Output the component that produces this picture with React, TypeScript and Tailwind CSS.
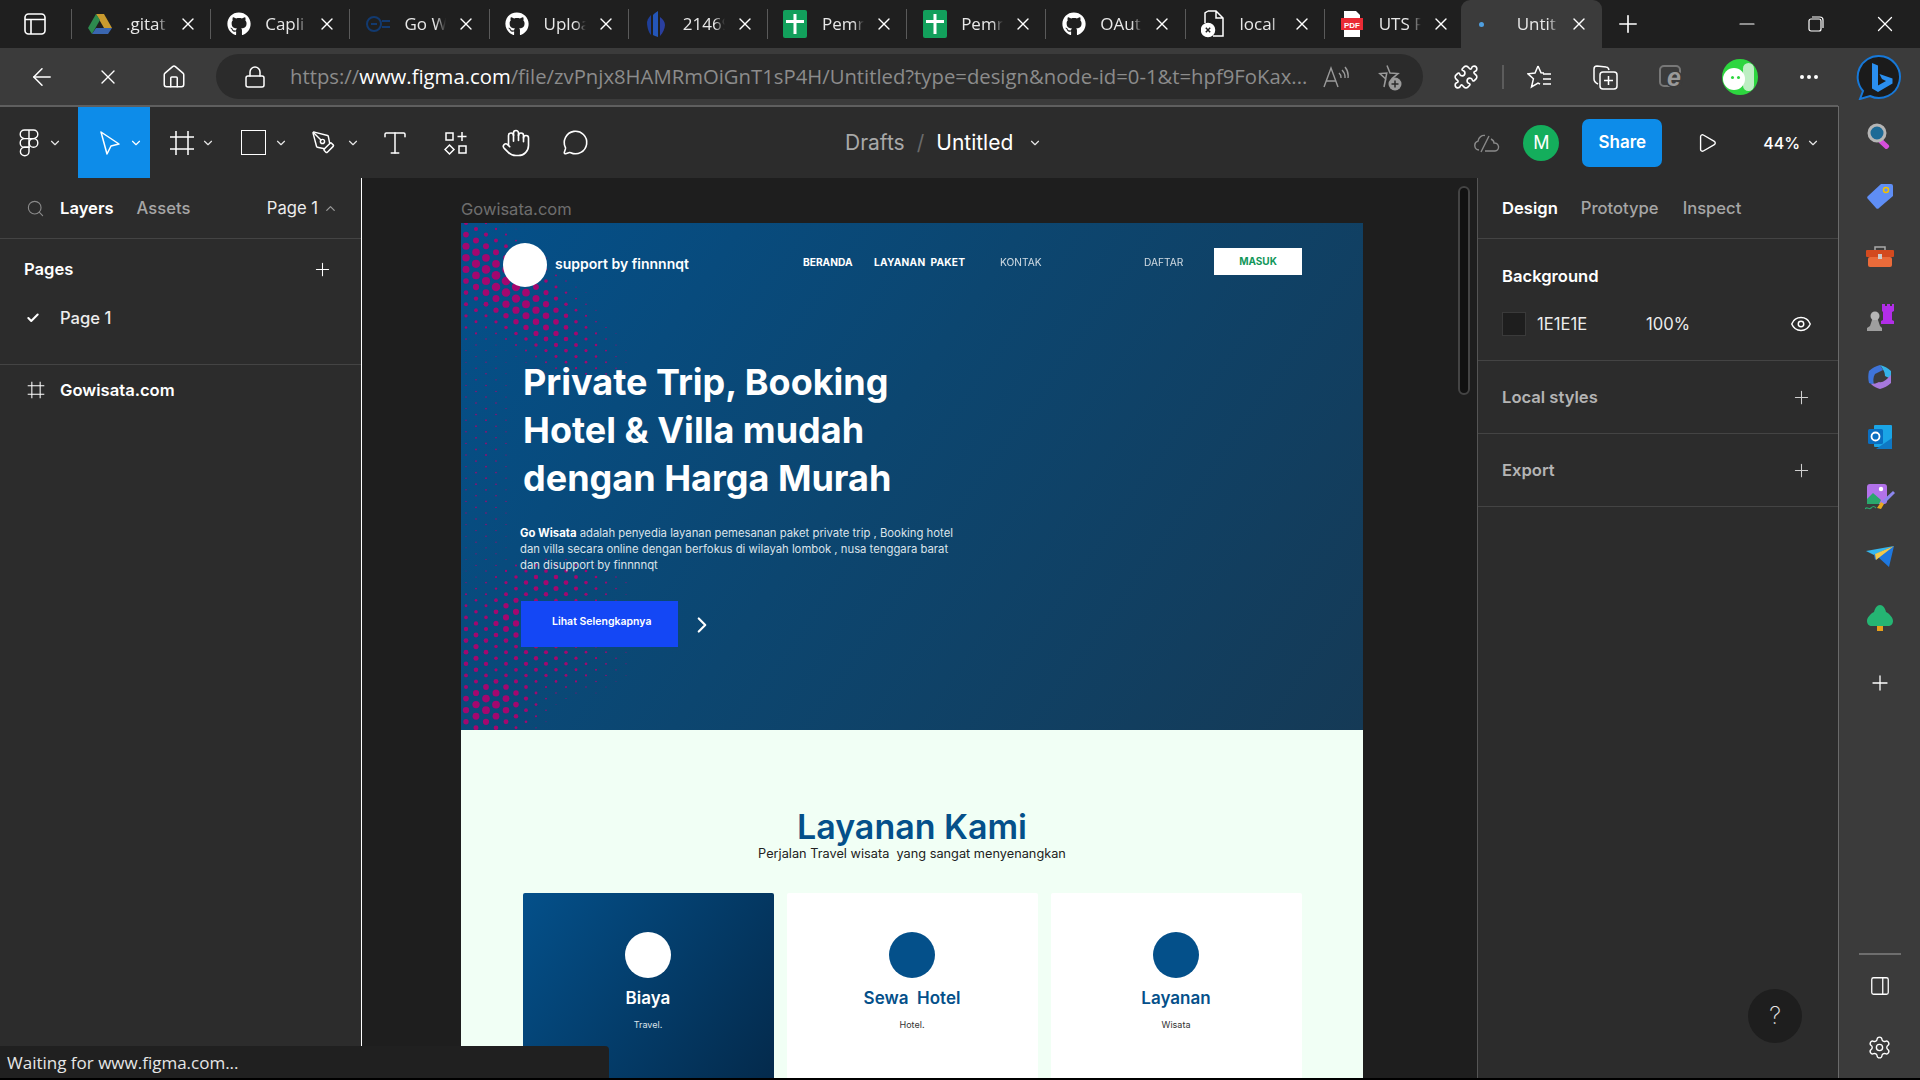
import {
  ArrowLeft,
  ChevronDown,
  ChevronRight,
  ChevronUp,
  Eye,
  Check,
  Hand,
  Home,
  Lock,
  MessageCircle,
  Minus,
  MoreHorizontal,
  PanelRight,
  PenTool,
  Play,
  Plus,
  Puzzle,
  Search,
  Settings,
  Type,
  X,
} from "lucide-react";
import { FaGithub } from "react-icons/fa";
import { ReactNode } from "react";

const PINK = "#a3076f";

// halftone blobs on the hero, [cx, cy, spreadX, spreadY, rotation, max radius]
const BLOBS: number[][] = [
  [38, 58, 110, 34, 0.7, 4.4],
  [10, 60, 36, 56, 0, 2.4],
  [28, 482, 48, 32, -0.3, 4],
  [14, 425, 34, 58, 0, 2.6],
  [52, 396, 34, 42, 0.6, 3.2],
  [88, 362, 62, 24, 0, 2.6],
  [70, 435, 80, 36, 0, 2.2],
  [22, 230, 36, 170, 0, 0.9],
];

const dotRadius = (x: number, y: number) => {
  let r = 0;
  for (const [cx, cy, sx, sy, rot, max] of BLOBS) {
    const dx = x - cx;
    const dy = y - cy;
    const u = dx * Math.cos(rot) + dy * Math.sin(rot);
    const v = -dx * Math.sin(rot) + dy * Math.cos(rot);
    r = Math.max(r, max * Math.exp(-(u * u) / (sx * sx) - (v * v) / (sy * sy)));
  }
  return r;
};

const Halftone = () => {
  const dots: { x: number; y: number; r: number }[] = [];
  for (let col = 0; col < 20; col++) {
    for (let row = 0; row < 46; row++) {
      const x = 5 + col * 10;
      const y = row * 11.6 + (col % 2 ? 6 : 0);
      const r = dotRadius(x, y);
      if (r > 0.4) dots.push({ x, y, r });
    }
  }
  return (
    <svg className="absolute left-0 top-0 h-[507px] w-[210px]" viewBox="0 0 210 507">
      {dots.map((d) => (
        <circle key={`${d.x}-${d.y}`} cx={d.x} cy={d.y} r={d.r} fill={PINK} />
      ))}
    </svg>
  );
};

const DriveIcon = () => (
  <svg width="24" height="22" viewBox="0 0 24 22">
    <path d="M8 1h8l8 14h-8z" fill="#c99a2e" />
    <path d="M8 1 0 15l4 6 8-14z" fill="#2d8a4e" />
    <path d="M4 21h16l4-6H8z" fill="#3a66b0" />
  </svg>
);

const GoIcon = () => (
  <svg width="26" height="18" viewBox="0 0 26 18" fill="none" stroke="#123a70" strokeWidth="2">
    <circle cx="9" cy="9" r="7" />
    <path d="M6 9h6M17 6h8M17 12h8" />
  </svg>
);

const BarsIcon = () => (
  <svg width="20" height="26" viewBox="0 0 20 26">
    <path d="M1 11c1-4 3-6 4-7v20c-2-2-4-7-4-13z" fill="#1f3f99" />
    <path d="M7 4c1-1 3-3 5-4v26c-2-1-4-1-5-2z" fill="#2456b8" />
    <path d="M14 6c3 2 5 5 5 8s-2 8-5 11z" fill="#2a3f9f" />
  </svg>
);

const SheetIcon = () => (
  <svg width="24" height="28" viewBox="0 0 24 28">
    <rect width="24" height="28" rx="2" fill="#12a05c" />
    <path d="M10.500 4h3v6H21v3h-7.500v11h-3V13H3v-3h7.500z" fill="#fff" />
  </svg>
);

const FileErrorIcon = () => (
  <svg width="24" height="28" viewBox="0 0 24 28" fill="none" stroke="#fff" strokeWidth="1.5">
    <path d="M7 1h8l7 7v18H12M4 13V3l3-2M15 1v7h7" />
    <circle cx="7" cy="20" r="6.5" fill="#fff" />
    <path d="m4.8 17.8 4.4 4.4m0-4.4-4.4 4.4" stroke="#1f1f1f" />
  </svg>
);

const PdfIcon = () => (
  <svg width="22" height="26" viewBox="0 0 22 26">
    <path d="M3 0h12l4 4v22H3z" fill="#fff" />
    <rect y="7" width="22" height="12" fill="#ea2b35" />
    <text x="11" y="16.5" fontSize="8" fontWeight="700" textAnchor="middle" fill="#fff" fontFamily="Liberation Sans">
      PDF
    </text>
  </svg>
);

const Tab = ({ icon, title }: { icon: ReactNode; title: string }) => (
  <div className="flex h-[48px] w-[139.2px] shrink-0 items-center border-r-0">
    <div className="h-[30px] w-px bg-[#5a5a5a]" />
    <div className="flex w-[54px] justify-center pl-px">{icon}</div>
    <span className="w-[42px] overflow-hidden whitespace-nowrap text-[17px] text-[#e8e8e8] [mask-image:linear-gradient(to_right,black_75%,transparent)]">
      {title}
    </span>
    <X size={20} strokeWidth={1.6} className="ml-[10px] text-white" />
  </div>
);

const TabBar = () => (
  <div className="flex h-[48px] items-center bg-[#1f1f1f] font-['Open_Sans',sans-serif]">
    <div className="flex w-[71px] justify-center pr-[1px]">
      <svg width="22" height="22" viewBox="0 0 22 22" fill="none" stroke="#fff" strokeWidth="1.6">
        <rect x="1" y="1" width="20" height="20" rx="3.5" />
        <path d="M1 6.5h20M7 6.5V21" />
      </svg>
    </div>
    <Tab icon={<DriveIcon />} title=".gitat" />
    <Tab icon={<FaGithub size={24} color="#fff" />} title="Capli" />
    <Tab icon={<GoIcon />} title="Go W" />
    <Tab icon={<FaGithub size={24} color="#fff" />} title="Uploa" />
    <Tab icon={<BarsIcon />} title="21469" />
    <Tab icon={<SheetIcon />} title="Pemr" />
    <Tab icon={<SheetIcon />} title="Pemr" />
    <Tab icon={<FaGithub size={24} color="#fff" />} title="OAut" />
    <Tab icon={<FileErrorIcon />} title="local" />
    <div className="flex h-[48px] w-[137px] shrink-0 items-center">
      <div className="h-[30px] w-px bg-[#5a5a5a]" />
      <div className="flex w-[54px] justify-center pl-px">
        <PdfIcon />
      </div>
      <span className="w-[42px] overflow-hidden whitespace-nowrap text-[17px] text-[#e8e8e8] [mask-image:linear-gradient(to_right,black_75%,transparent)]">
        UTS F
      </span>
      <X size={20} strokeWidth={1.6} className="ml-[10px] text-white" />
    </div>
    <div className="flex h-[48px] w-[141px] shrink-0 items-center rounded-t-[9px] bg-[#3b3b3b]">
      <div className="ml-[18px] h-[5px] w-[5px] rounded-full bg-[#4f9fe0]" />
      <span className="ml-[33px] w-[42px] overflow-hidden whitespace-nowrap text-[17px] text-[#e8e8e8] [mask-image:linear-gradient(to_right,black_75%,transparent)]">
        Untit
      </span>
      <X size={20} strokeWidth={1.6} className="ml-[10px] text-white" />
    </div>
    <Plus size={28} strokeWidth={1.4} className="ml-[12px] text-white" />
    <Minus size={24} strokeWidth={1.2} className="ml-[93px] text-white" />
    <svg className="ml-[49px]" width="16" height="16" viewBox="0 0 16 16" fill="none" stroke="#fff" strokeWidth="1.2">
      <rect x="1" y="3" width="12" height="12" rx="2" />
      <path d="M4 1h8a3 3 0 0 1 3 3v8" />
    </svg>
    <X size={26} strokeWidth={1.2} className="ml-[48px] text-white" />
  </div>
);

const ReadAloud = () => (
  <svg width="26" height="24" viewBox="0 0 26 24" fill="none" stroke="#9a9a9a" strokeWidth="1.4">
    <path d="M1 22 8 3l7 19M3.5 16h9" />
    <path d="M16 8a6 6 0 0 1 2 5M19 5a10 10 0 0 1 3 8M22 2a14 14 0 0 1 3 11" />
  </svg>
);

const StarPlus = () => (
  <svg width="28" height="28" viewBox="0 0 28 28" fill="none" stroke="#9a9a9a" strokeWidth="1.5">
    <path d="M12 2.5 15 10l8 .6-6 5 1 4M9 24l1.8-8-6-5.4 7-.6z" />
    <circle cx="20" cy="21" r="6.5" fill="#9a9a9a" stroke="none" />
    <path d="M20 17.5v7M16.5 21h7" stroke="#2b2b2b" />
  </svg>
);

const FavList = () => (
  <svg width="26" height="26" viewBox="0 0 26 26" fill="none" stroke="#fff" strokeWidth="1.5">
    <path d="M11 2 8 9l-7 .8 5.4 5L4.5 23l6.5-4 2 1M11 2l3 6.8 3 .2M16 10h8M16 15h8M16 20h8" />
  </svg>
);

const Collections = () => (
  <svg width="26" height="26" viewBox="0 0 26 26" fill="none" stroke="#fff" strokeWidth="1.5">
    <path d="M6 20c-2-1-4-2-4-5V5c0-2 1.500-3 3-3l9 1c1.500 0 2.500 1 3 3" />
    <rect x="8" y="8" width="17" height="17" rx="3" />
    <path d="M16.500 12v9M12 16.500h9" />
  </svg>
);

const IeMode = () => (
  <svg width="26" height="24" viewBox="0 0 26 24" fill="none">
    <rect x="1" y="1" width="20" height="20" rx="4" stroke="#777" strokeWidth="2" />
    <circle cx="15" cy="14" r="9" fill="#3b3b3b" />
    <text x="15" y="21" fontSize="25" fontWeight="700" fontStyle="italic" textAnchor="middle" fill="#999" fontFamily="Liberation Sans">
      e
    </text>
  </svg>
);

const ChatExt = () => (
  <div className="relative h-[36px] w-[36px] overflow-hidden rounded-full bg-[#2dd63f]">
    <div className="absolute left-[21px] top-[4px] h-[28px] w-[11px] rounded-[6px] bg-[#bdeec3]" />
    <div className="absolute left-[1px] top-[9px] h-[22px] w-[22px] rounded-full bg-white" />
    <div className="absolute left-[9px] top-[17px] h-[3px] w-[3px] rounded-full bg-[#2dd63f]" />
    <div className="absolute left-[15px] top-[17px] h-[3px] w-[3px] rounded-full bg-[#2dd63f]" />
  </div>
);

const BingIcon = () => (
  <svg width="46" height="46" viewBox="0 0 46 46" fill="none">
    <path d="M23 2a21 21 0 1 1-9 40l-10 3 3-8A21 21 0 0 1 23 2z" fill="#1b1b1b" stroke="#1678d8" strokeWidth="2" />
    <path d="M16 9l6 2.500v20l8-4.500-4-2-2.500-5 13 4.500v5L22 38l-6-3.500z" fill="#2a8ff0" />
  </svg>
);

const AddressBar = () => (
  <div className="flex h-[57px] items-center bg-[#3b3b3b]">
    <ArrowLeft size={28} strokeWidth={1.3} className="ml-[28px] text-white" />
    <X size={24} strokeWidth={1.4} className="ml-[40px] text-white" />
    <Home size={26} strokeWidth={1.4} className="ml-[41px] text-white" />
    <div className="ml-[29px] flex h-[45px] w-[1207px] items-center rounded-full bg-[#2b2b2b] font-['Open_Sans',sans-serif]">
      <Lock size={24} strokeWidth={1.5} className="ml-[27px] text-white" />
      <span className="ml-[23px] whitespace-nowrap text-[20.300px] text-[#8c8c8c]">
        https://<span className="text-white">www.figma.com</span>/file/zvPnjx8HAMRmOiGnT1sP4H/Untitled?type=design&amp;node-id=0-1&amp;t=hpf9FoKax...
      </span>
      <div className="ml-auto flex items-center gap-[26px] pr-[20px]">
        <ReadAloud />
        <StarPlus />
      </div>
    </div>
    <Puzzle size={26} strokeWidth={1.5} className="ml-[30px] text-white" />
    <div className="ml-[23px] h-[24px] w-[2px] bg-[#5c5c5c]" />
    <div className="ml-[23px]">
      <FavList />
    </div>
    <div className="ml-[39px]">
      <Collections />
    </div>
    <div className="ml-[41px]">
      <IeMode />
    </div>
    <div className="ml-[37px]">
      <ChatExt />
    </div>
    <MoreHorizontal size={24} strokeWidth={2} className="ml-[39px] text-white" />
    <div className="ml-[35px]">
      <BingIcon />
    </div>
  </div>
);

const FigmaMark = () => (
  <svg width="20" height="28" viewBox="0 0 20 28" fill="none" stroke="#fff" strokeWidth="1.4">
    <path d="M10 1H5.500a4.300 4.300 0 0 0 0 8.600H10zM10 1h4.500a4.300 4.300 0 0 1 0 8.600H10zM10 9.600H5.500a4.300 4.300 0 0 0 0 8.600H10z" />
    <circle cx="14.500" cy="13.900" r="4.300" />
    <path d="M10 18.200H5.500a4.300 4.300 0 1 0 4.500 4.300z" />
  </svg>
);

const FrameIcon = ({ size = 26, width = 1.5 }: { size?: number; width?: number }) => (
  <svg width={size} height={size} viewBox="0 0 26 26" fill="none" stroke="#fff" strokeWidth={width}>
    <path d="M7 1v24M19 1v24M1 7h24M1 19h24" />
  </svg>
);

const Resources = () => (
  <svg width="24" height="26" viewBox="0 0 24 26" fill="none" stroke="#fff" strokeWidth="1.5">
    <rect x="2" y="3" width="7" height="7" />
    <path d="M18 2v9M13.500 6.500h9M5.500 15l4.500 4.500L5.500 24 1 19.500z" />
    <rect x="15" y="16" width="7" height="7" />
  </svg>
);

const ToolBar = () => (
  <div className="flex h-[71px] items-center bg-[#2c2c2c] font-['Inter',sans-serif]">
    <div className="flex w-[78px] items-center pl-[19px]">
      <FigmaMark />
      <ChevronDown size={14} className="ml-[9px] text-[#e6e6e6]" />
    </div>
    <div className="flex h-[71px] w-[72px] items-center bg-[#0d8ce9] pl-[21px]">
      <svg width="22" height="26" viewBox="0 0 22 26" fill="none" stroke="#fff" strokeWidth="1.5">
        <path d="M2 2 20 14l-8 2-4 8z" strokeLinejoin="round" />
      </svg>
      <ChevronDown size={14} className="ml-[8px] text-white" />
    </div>
    <div className="flex w-[71px] items-center pl-[19px]">
      <FrameIcon />
      <ChevronDown size={14} className="ml-[6px] text-[#e6e6e6]" />
    </div>
    <div className="flex w-[71px] items-center pl-[20px]">
      <div className="h-[25px] w-[25px] border-[1.5px] border-white" />
      <ChevronDown size={14} className="ml-[8px] text-[#e6e6e6]" />
    </div>
    <div className="flex w-[71px] items-center pl-[19px]">
      <PenTool size={25} strokeWidth={1.4} className="text-white" />
      <ChevronDown size={14} className="ml-[10px] text-[#e6e6e6]" />
    </div>
    <div className="flex w-[61px] items-center pl-[17px]">
      <Type size={30} strokeWidth={1.2} className="text-white" />
    </div>
    <div className="flex w-[60px] items-center pl-[20px]">
      <Resources />
    </div>
    <div className="flex w-[60px] items-center pl-[17px]">
      <Hand size={30} strokeWidth={1.3} className="text-white" />
    </div>
    <MessageCircle size={27} strokeWidth={1.4} className="ml-[18px] text-white" />
    <div className="ml-[256px] flex items-center text-[21px]">
      <span className="text-[#a9a9a9]">Drafts</span>
      <span className="ml-[12px] text-[#6a6a6a]">/</span>
      <span className="ml-[12px] text-white">Untitled</span>
      <ChevronDown size={14} className="ml-[15px] text-[#e6e6e6]" />
    </div>
    <svg className="ml-[432px]" width="26" height="24" viewBox="0 0 26 24" fill="none" stroke="#8a8a8a" strokeWidth="1.4">
      <path d="M5 19a4.500 4.500 0 0 1-1-8.800C4.500 6 8 4 11 4.500M15 5l-8 16M17 8c2 1 3 3 3 4a4 4 0 0 1 1 8H11" />
    </svg>
    <div className="ml-[23px] flex h-[36px] w-[36px] items-center justify-center rounded-full bg-[#14ae5c] text-[18px] text-white">M</div>
    <div className="ml-[23px] flex h-[48px] w-[80px] items-center justify-center rounded-[7px] bg-[#0d8ce9] text-[17px] font-semibold text-white">
      Share
    </div>
    <Play size={22} strokeWidth={1.5} className="ml-[34px] text-white" />
    <span className="ml-[45px] text-[16px] font-medium text-white">44%</span>
    <ChevronDown size={14} className="ml-[6px] text-[#e6e6e6]" />
  </div>
);

const LeftPanel = () => (
  <aside className="flex w-[362px] shrink-0 flex-col border-r border-white bg-[#2c2c2c] font-['Inter',sans-serif] text-[16.600px]">
    <div className="flex h-[61px] items-center border-b border-[#444] pl-[26px] pr-[23px]">
      <Search size={19} strokeWidth={1.4} className="text-[#8a8a8a]" />
      <span className="ml-[15px] font-semibold text-white">Layers</span>
      <span className="ml-[23px] font-medium text-[#a6a6a6]">Assets</span>
      <span className="ml-auto text-[#ededed]">Page 1</span>
      <ChevronUp size={15} className="ml-[5px] text-[#9a9a9a]" />
    </div>
    <div className="flex h-[126px] flex-col border-b border-[#444]">
      <div className="flex h-[60px] items-center pl-[24px] pr-[28px]">
        <span className="font-semibold text-white">Pages</span>
        <Plus size={21} strokeWidth={1.2} className="ml-auto text-white" />
      </div>
      <div className="flex h-[38px] items-center pl-[26px]">
        <Check size={14} strokeWidth={3.5} className="text-white" />
        <span className="ml-[20px] font-medium text-[#ededed]">Page 1</span>
      </div>
    </div>
    <div className="flex h-[50px] items-center pl-[27px]">
      <FrameIcon size={18} />
      <span className="ml-[15px] font-semibold text-white">Gowisata.com</span>
    </div>
  </aside>
);

const NavLink = ({ children, className }: { children: ReactNode; className: string }) => (
  <span className={`mb-[5px] whitespace-nowrap text-[10.200px] text-white ${className}`}>{children}</span>
);

const Hero = () => (
  <section className="relative h-[507px] shrink-0 overflow-hidden bg-[linear-gradient(125deg,#04508a_0%,#0c4670_45%,#153a56_100%)] font-['Inter',sans-serif]">
    <Halftone />
    <div className="relative flex items-center pl-[42px] pt-[20px]">
      <div className="h-[44px] w-[44px] rounded-full bg-white" />
      <span className="mb-[3px] ml-[8px] w-[248px] whitespace-nowrap text-[14px] font-semibold text-white">support by finnnnqt</span>
      <NavLink className="w-[71px] font-bold">BERANDA</NavLink>
      <NavLink className="w-[126px] font-bold tracking-[0.2px]">LAYANAN&nbsp; PAKET</NavLink>
      <NavLink className="w-[144px] opacity-80">KONTAK</NavLink>
      <NavLink className="w-[70px] opacity-80">DAFTAR</NavLink>
      <div className="mb-[7px] flex h-[27px] w-[88px] items-center justify-center bg-white text-[10px] font-bold text-[#12975a]">MASUK</div>
    </div>
    <h1 className="relative ml-[62px] mt-[71px] text-[36px] font-bold leading-[48px] text-white">
      Private Trip, Booking
      <br />
      Hotel &amp; Villa mudah
      <br />
      dengan Harga Murah
    </h1>
    <p className="relative ml-[59px] mt-[23px] w-[438px] text-[11.300px] leading-[16px] text-[#dbe3ea]">
      <b className="font-bold text-white">Go Wisata</b> adalah penyedia layanan pemesanan paket private trip , Booking hotel dan villa secara online dengan berfokus di wilayah lombok , nusa tenggara barat dan disupport by finnnnqt
    </p>
    <div className="relative ml-[60px] mt-[28px] flex items-center">
      <div className="flex h-[46px] w-[157px] items-start bg-[#1447f5] pl-[31px] pt-[14px] text-[10.500px] font-semibold leading-[14px] text-white">
        Lihat Selengkapnya
      </div>
      <ChevronRight size={26} strokeWidth={2} className="ml-[11px] mt-[2px] text-white" />
    </div>
  </section>
);

const ServiceCard = ({ active, title, sub }: { active?: boolean; title: string; sub: string }) => (
  <div
    className={`flex h-[200px] w-[251px] shrink-0 flex-col items-center rounded-t-[2px] pt-[39px] ${
      active ? "bg-[linear-gradient(125deg,#04508a,#04294a)]" : "bg-white"
    }`}
  >
    <div className={`h-[46px] w-[46px] rounded-full ${active ? "bg-white" : "bg-[#04508a]"}`} />
    <span className={`mt-[8px] text-[17px] font-semibold leading-[24px] ${active ? "text-white" : "text-[#04508a]"}`}>{title}</span>
    <span className={`mt-[9px] text-[9px] leading-[12px] ${active ? "text-[#dbe3ea]" : "text-[#333]"}`}>{sub}</span>
  </div>
);

const Services = () => (
  <section className="flex min-h-0 flex-1 flex-col items-center overflow-hidden bg-[#f1fff5] font-['Inter',sans-serif]">
    <h2 className="mt-[78px] shrink-0 text-[34px] font-semibold leading-[38px] text-[#04508a]">Layanan Kami</h2>
    <p className="-mt-[1px] shrink-0 text-[12.750px] leading-[18px] text-[#222]">Perjalan Travel wisata&nbsp; yang sangat menyenangkan</p>
    <div className="mt-[30px] flex shrink-0 gap-[13px]">
      <ServiceCard active title="Biaya" sub="Travel." />
      <ServiceCard title={"Sewa\u00a0 Hotel"} sub="Hotel." />
      <ServiceCard title="Layanan" sub="Wisata" />
    </div>
  </section>
);

const Canvas = () => (
  <main className="relative flex flex-1 overflow-hidden bg-[#1e1e1e] pl-[99px] font-['Inter',sans-serif]">
    <div className="flex h-full w-[902px] flex-col">
      <div className="flex h-[45px] shrink-0 items-end pb-[1px] text-[16.500px] text-[#6e6e6e]">Gowisata.com</div>
      <Hero />
      <Services />
    </div>
    <div className="ml-[95px] mt-[8px] h-[209px] w-[12px] rounded-[6px] border-2 border-[#444] bg-[#111]" />
  </main>
);

const DesignRow = ({ label }: { label: string }) => (
  <div className="flex h-[73px] items-center border-b border-[#444] pl-[24px] pr-[26px]">
    <span className="font-semibold text-[#b4b4b4]">{label}</span>
    <Plus size={21} strokeWidth={1.2} className="ml-auto text-[#d0d0d0]" />
  </div>
);

const RightPanel = () => (
  <aside className="flex w-[361px] shrink-0 flex-col border-l border-[#555] bg-[#2c2c2c] font-['Inter',sans-serif] text-[16.600px]">
    <div className="flex h-[61px] items-center border-b border-[#444] pl-[24px]">
      <span className="font-semibold text-white">Design</span>
      <span className="ml-[23px] font-medium text-[#a6a6a6]">Prototype</span>
      <span className="ml-[24px] font-medium text-[#a6a6a6]">Inspect</span>
    </div>
    <div className="h-[122px] border-b border-[#444] pl-[24px] pr-[26px]">
      <div className="pt-[26px] font-semibold leading-[22px] text-white">Background</div>
      <div className="mt-[25px] flex items-center">
        <div className="h-[24px] w-[24px] border border-[#3a3a3a] bg-[#1e1e1e]" />
        <span className="ml-[11px] w-[109px] text-[#ededed]">1E1E1E</span>
        <span className="text-[#ededed]">100%</span>
        <Eye size={22} strokeWidth={1.6} className="ml-auto text-white" />
      </div>
    </div>
    <DesignRow label="Local styles" />
    <DesignRow label="Export" />
  </aside>
);

const SideIcon = ({ children }: { children: ReactNode }) => (
  <div className="flex h-[60.200px] items-center justify-center">{children}</div>
);

const SideBar = () => (
  <aside className="flex w-[82px] shrink-0 flex-col border-t-0 bg-[#3b3b3b] pt-[1px]">
    <div className="flex flex-1 flex-col border-l border-[#6a6a6a]">
      <SideIcon>
        <svg width="26" height="26" viewBox="0 0 26 26">
          <rect x="14" y="15" width="12" height="5" rx="2" transform="rotate(42 14 15)" fill="#d64fdc" />
          <circle cx="10" cy="10" r="8" fill="#1d6a96" stroke="#b5b5b5" strokeWidth="3" />
        </svg>
      </SideIcon>
      <SideIcon>
        <svg width="26" height="26" viewBox="0 0 26 26">
          <path d="M14 1h10a2 2 0 0 1 2 2v10L12 25a2 2 0 0 1-3 0L1 16a2 2 0 0 1 0-3z" fill="#5f8ef5" />
          <circle cx="19" cy="7" r="2.500" fill="none" stroke="#f2c200" strokeWidth="1.500" />
        </svg>
      </SideIcon>
      <SideIcon>
        <svg width="28" height="22" viewBox="0 0 28 22">
          <path d="M9 5V2h10v3" fill="none" stroke="#aaa" strokeWidth="1.500" />
          <rect y="5" width="28" height="7" rx="1" fill="#d34a1f" />
          <rect x="2" y="12" width="24" height="10" rx="2" fill="#ea6b3a" />
          <rect x="12" y="9" width="4" height="5" fill="#ccc" />
        </svg>
      </SideIcon>
      <SideIcon>
        <svg width="28" height="28" viewBox="0 0 28 28">
          <path d="M16 1h3v2h2V1h3v2h2V1h2v7l-2 1v8l2 1v3H15v-3l2-1V9l-1-1z" fill="#b22ee8" />
          <circle cx="9" cy="13" r="4.500" fill="#b5b5b5" />
          <path d="M6 17h6l2 6 2 2v3H1v-3l3-2z" fill="#9e9e9e" />
        </svg>
      </SideIcon>
      <SideIcon>
        <svg width="26" height="26" viewBox="0 0 26 26">
          <path d="M13 1c-4 1-8 3-11 6-1 4-1 8 0 12l5 2c-1-4-1-8 1-11l8-4z" fill="#3f74d9" />
          <path d="M13 1c4 1 8 3 11 6v8l-6-3c0-3-1-6-5-11z" fill="#35b3e8" />
          <path d="M24 11v8c-3 3-7 5-11 6-3-1-6-2-9-5 3 0 6-1 8-2 4 1 7-2 12-7z" fill="#a678dc" />
        </svg>
      </SideIcon>
      <SideIcon>
        <svg width="24" height="24" viewBox="0 0 24 24">
          <rect x="6" y="0" width="18" height="22" rx="1" fill="#1aa5e6" />
          <path d="M8 24h16V13z" fill="#0f78c4" />
          <rect x="0" y="4" width="15" height="15" rx="1.500" fill="#0a6ec0" />
          <circle cx="7.500" cy="11.500" r="4" fill="none" stroke="#fff" strokeWidth="1.800" />
        </svg>
      </SideIcon>
      <SideIcon>
        <svg width="30" height="28" viewBox="0 0 30 28">
          <rect x="2" y="1" width="20" height="20" rx="3" fill="#b272ea" />
          <path d="M2 16l6-6 8 7-2 4H2z" fill="#2aa86c" />
          <circle cx="16" cy="6" r="2.200" fill="#fff" />
          <path d="m28 8 2 2-11 11-3-2z" fill="#8c86ef" />
          <path d="m16 19 3 2-3 5-4-1z" fill="#e8aa1f" />
          <path d="M0 26c2-3 4 1 6-1s3-2 5 0" fill="none" stroke="#2aa86c" strokeWidth="1.200" />
        </svg>
      </SideIcon>
      <SideIcon>
        <svg width="28" height="22" viewBox="0 0 28 22">
          <path d="M0 5 28 0 8 9z" fill="#35b7ef" />
          <path d="M28 0 8 9l1 5 3-3 11 10z" fill="#1e78e0" />
          <path d="M9 8 28 0 10 14z" fill="#f2c94c" />
        </svg>
      </SideIcon>
      <SideIcon>
        <svg width="26" height="26" viewBox="0 0 26 26">
          <rect x="10" y="20" width="6" height="6" fill="#e8a11a" />
          <path d="M13 0c3 0 5 3 6 7 4 2 7 6 7 9 0 3-2 5-5 5H5c-3 0-5-2-5-5 0-3 3-7 7-9 1-4 3-7 6-7z" fill="#25b573" />
        </svg>
      </SideIcon>
      <Plus size={24} strokeWidth={1.3} className="ml-[29px] mt-[23px] text-white" />
      <div className="ml-[20px] mt-auto h-[2px] w-[42px] bg-[#6e6e6e]" />
      <div className="flex h-[62px] items-center pl-[30px]">
        <PanelRight size={22} strokeWidth={1.4} className="text-white" />
      </div>
      <div className="flex h-[61px] items-center pl-[28px]">
        <Settings size={25} strokeWidth={1.3} className="text-white" />
      </div>
    </div>
  </aside>
);

export default function App() {
  return (
    <div className="relative flex h-[1080px] w-[1920px] flex-col overflow-hidden bg-black pb-[2px]">
      <TabBar />
      <AddressBar />
      <div className="flex min-h-0 flex-1">
        <div className="flex w-[1838px] shrink-0 flex-col border-t-2 border-[#5f5f5f]">
          <ToolBar />
          <div className="flex min-h-0 flex-1">
            <LeftPanel />
            <Canvas />
            <RightPanel />
          </div>
        </div>
        <SideBar />
      </div>

      {/* overlays */}
      <div className="absolute bottom-[2px] left-0 flex h-[32px] w-[609px] items-center rounded-tr-[4px] bg-[#202020] pl-[7px] pt-[1px] font-['Open_Sans',sans-serif] text-[17px] text-[#e6e6e6]">
        Waiting for www.figma.com...
      </div>
      <div className="absolute left-[1748px] top-[989px] flex h-[54px] w-[54px] items-center justify-center rounded-full bg-[#1e1e1e] font-['Inter',sans-serif] text-[24px] font-extralight text-[#e6e6e6]">
        ?
      </div>
    </div>
  );
}
